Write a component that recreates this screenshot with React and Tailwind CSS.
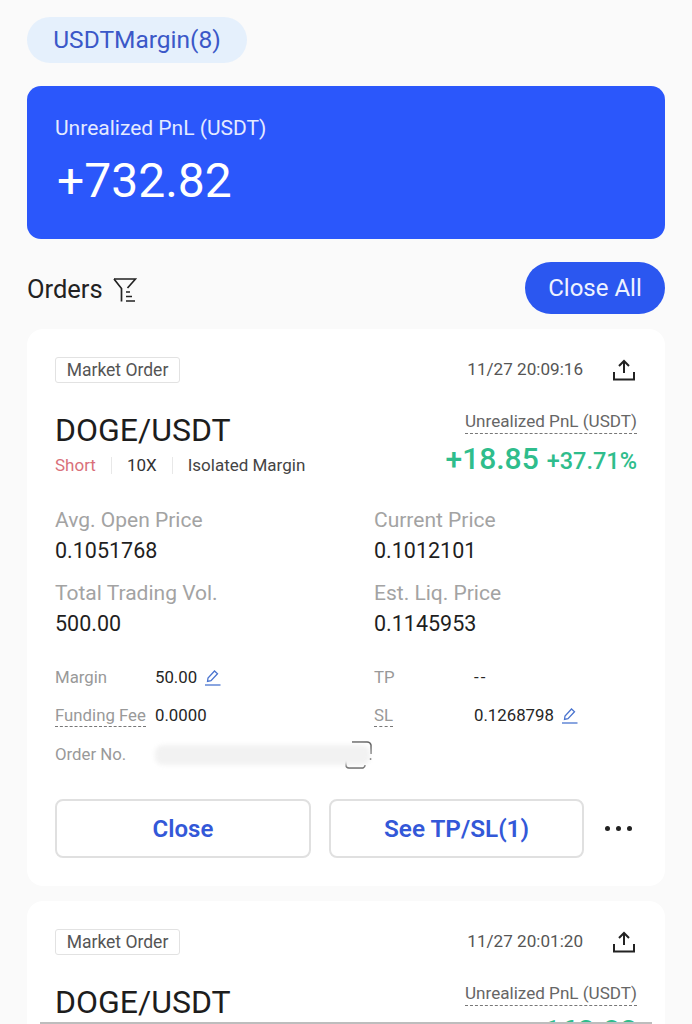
import React from "react";

const font = { fontFamily: "Roboto, 'Noto Sans', sans-serif" };

function ShareIcon() {
  return (
    <svg width="24" height="24" viewBox="0 0 24 24" fill="none" stroke="#222" strokeWidth="2">
      <path d="M12 15V3.5M7 8l5-5 5 5" />
      <path d="M2 14v7.5h20V14" />
    </svg>
  );
}

function EditIcon() {
  return (
    <svg width="17" height="18" viewBox="0 0 17 18" fill="none" stroke="#4a74cf" strokeWidth="1.3">
      <path d="M3.5 12.5l.5-3.5 6.5-7 3 2.7-6.5 7z" />
      <path d="M1 16h15.5" />
    </svg>
  );
}

function FilterIcon() {
  return (
    <svg width="24" height="26" viewBox="0 0 24 26" fill="none" stroke="#222" strokeWidth="1.7">
      <path d="M1 2h21.500l-8 9" />
      <path d="M1 2l7.500 9.500v13" />
      <path d="M13 15h4M13 19.500h6M13 24h9" />
    </svg>
  );
}

function CopyIcon() {
  return (
    <svg className="ml-[-26px]" width="28" height="28" viewBox="0 0 28 28" fill="none" stroke="#666" strokeWidth="1.5">
      <path d="M8 1h15a4 4 0 0 1 4 3v9M26.500 17v2" />
      <path d="M2 19v5a3 3 0 0 0 3 3h14a3 3 0 0 0 2-3" />
    </svg>
  );
}

function Cell({ label, value, dashed, children }) {
  return (
    <div className="flex h-[38.500px] items-center">
      <span className="w-[100px] shrink-0 text-[16.800px] text-[#999]">
        <span className={dashed ? "border-b border-dashed border-[#777] pb-[1px]" : ""}>{label}</span>
      </span>
      <span className={value === "--" ? "text-[16.800px] tracking-[2px] text-[#262626]" : "text-[16.800px] text-[#262626]"}>{value}</span>
      {children}
    </div>
  );
}

function OrderHead({ time }) {
  return (
    <div className="flex h-[28px] items-center justify-between">
      <span className="flex h-[26px] w-[125px] items-center justify-center rounded-[3px] border border-[#e2e2e2] text-[17.500px] text-[#555]">
        Market Order
      </span>
      <div className="flex items-center gap-[29px] pr-[1px]">
        <span className="text-[17.100px] text-[#555]">{time}</span>
        <ShareIcon />
      </div>
    </div>
  );
}

function PnlLabel() {
  return (
    <span className="border-b border-dashed border-[#777] pb-[1px] text-[17.100px] leading-[22px] text-[#666]">
      Unrealized PnL (USDT)
    </span>
  );
}

export default function App() {
  return (
    <div className="relative h-[1024px] w-[692px] overflow-hidden bg-[#fafafa] px-[27px] pt-[17px]" style={font}>
      {/* Margin pill */}
      <div className="flex h-[46px] w-[220px] items-center justify-center rounded-full bg-[#e5f0fc] text-[24.500px] text-[#3b58c8]">
        USDTMargin(8)
      </div>

      {/* Total PnL */}
      <div className="mt-[23px] h-[153px] rounded-[14px] bg-[#2b57fb] px-[28px] pt-[29px] text-white">
        <div className="text-[21px] leading-[26px] text-[#e4eaff]">Unrealized PnL (USDT)</div>
        <div className="mt-[13px] pl-[2px] text-[48px] leading-[54px]">+732.82</div>
      </div>

      {/* Orders heading */}
      <div className="mt-[23px] flex items-center justify-between">
        <div className="flex items-center gap-[10px] pt-[3px]">
          <span className="text-[25.500px] text-[#222]">Orders</span>
          <FilterIcon />
        </div>
        <button className="h-[52px] w-[140px] rounded-full bg-[#2b57f0] text-[24px] text-[#eef2ff]">Close All</button>
      </div>

      {/* First order */}
      <div className="mt-[15px] h-[557px] rounded-[16px] bg-white px-[28px] pt-[27px]">
        <OrderHead time="11/27 20:09:16" />

        <div className="mt-[26px] flex justify-between">
          <div>
            <div className="text-[32px] leading-[40px] text-[#1d1d1d]">DOGE/USDT</div>
            <div className="mt-[4px] flex items-center text-[17px] leading-[22px]">
              <span className="text-[#d9707a]">Short</span>
              <span className="mx-[15px] h-[17px] w-px bg-[#e8e8e8]" />
              <span className="text-[#333]">10X</span>
              <span className="mx-[15px] h-[17px] w-px bg-[#e8e8e8]" />
              <span className="text-[#444]">Isolated Margin</span>
            </div>
          </div>
          <div className="flex flex-col items-end">
            <PnlLabel />
            <div className="mt-[7px] flex items-baseline gap-[8px] font-medium text-[#2fbd8c]">
              <span className="text-[30px] leading-[36px]">+18.85</span>
              <span className="text-[23.500px]">+37.71%</span>
            </div>
          </div>
        </div>

        <div className="mt-[28px] grid grid-cols-[319px_1fr]">
          <div className="h-[61px]">
            <div className="text-[21px] leading-[27px] text-[#a3a3a3]">Avg. Open Price</div>
            <div className="mt-[4px] text-[21.500px] leading-[26px] text-[#1f1f1f]">0.1051768</div>
          </div>
          <div className="h-[61px]">
            <div className="text-[21px] leading-[27px] text-[#a3a3a3]">Current Price</div>
            <div className="mt-[4px] text-[21.500px] leading-[26px] text-[#1f1f1f]">0.1012101</div>
          </div>
          <div className="mt-[12px] h-[61px]">
            <div className="text-[21px] leading-[27px] text-[#a3a3a3]">Total Trading Vol.</div>
            <div className="mt-[4px] text-[21.500px] leading-[26px] text-[#1f1f1f]">500.00</div>
          </div>
          <div className="mt-[12px] h-[61px]">
            <div className="text-[21px] leading-[27px] text-[#a3a3a3]">Est. Liq. Price</div>
            <div className="mt-[4px] text-[21.500px] leading-[26px] text-[#1f1f1f]">0.1145953</div>
          </div>
        </div>

        <div className="mt-[17px] grid grid-cols-[319px_1fr]">
          <Cell label="Margin" value="50.00">
            <span className="ml-[7px]"><EditIcon /></span>
          </Cell>
          <Cell label="TP" value="--" />
          <Cell label="Funding Fee" value="0.0000" dashed />
          <Cell label="SL" value="0.1268798" dashed>
            <span className="ml-[7px]"><EditIcon /></span>
          </Cell>
          <div className="col-span-2 flex h-[38.500px] items-center">
            <span className="w-[100px] shrink-0 text-[16.800px] text-[#999]">Order No.</span>
            {/* blurred order number */}
            <div className="h-[20px] w-[215px] rounded-[8px] bg-[#f2f2f2] blur-[2px]" />
            <CopyIcon />
          </div>
        </div>

        <div className="mt-[25.500px] flex items-center">
          <button className="h-[59px] w-[256px] rounded-[8px] border-2 border-[#e0e0e0] text-[24px] font-semibold text-[#3358d8]">
            Close
          </button>
          <button className="ml-[18px] h-[59px] w-[255px] rounded-[8px] border-2 border-[#e0e0e0] text-[24.300px] font-semibold text-[#3358d8]">
            See TP/SL(1)
          </button>
          <div className="ml-[21px] flex gap-[6px]">
            <span className="h-[5px] w-[5px] rounded-full bg-[#222]" />
            <span className="h-[5px] w-[5px] rounded-full bg-[#222]" />
            <span className="h-[5px] w-[5px] rounded-full bg-[#222]" />
          </div>
        </div>
      </div>

      {/* Second order, cut off by the screen */}
      <div className="mt-[15px] h-[300px] rounded-[16px] bg-white px-[28px] pt-[27px]">
        <OrderHead time="11/27 20:01:20" />
        <div className="mt-[26px] flex justify-between">
          <div className="text-[32px] leading-[40px] text-[#1d1d1d]">DOGE/USDT</div>
          <div className="flex flex-col items-end">
            <PnlLabel />
            <div className="mt-[7px] text-[30px] font-medium leading-[36px] text-[#2fbd8c]">+162.82</div>
          </div>
        </div>
      </div>

      <div className="absolute bottom-0 left-[40px] right-[40px] h-[2px] bg-[#bdbdbd]" />
    </div>
  );
}
